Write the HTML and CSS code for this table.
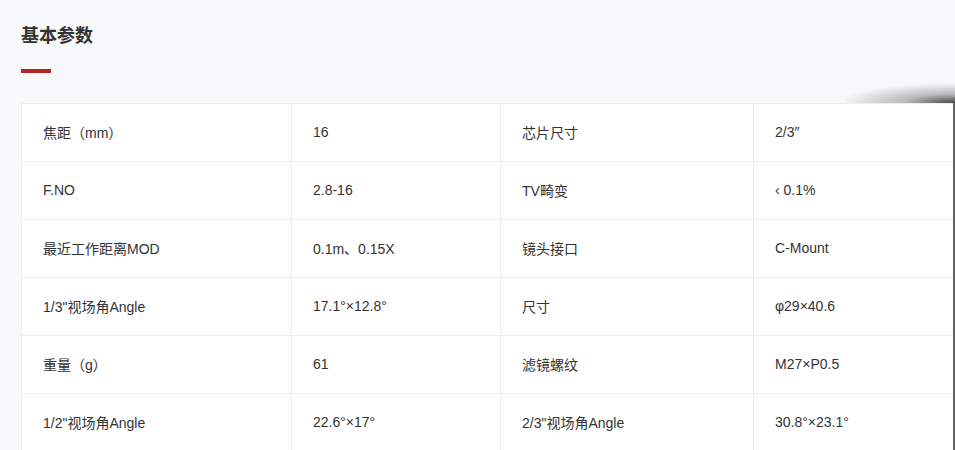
FILE: index.html
```html
<!DOCTYPE html>
<html lang="zh-CN">
<head>
    <meta charset="UTF-8">
    <meta name="viewport" content="width=device-width, initial-scale=1.0">
    <title>基本参数</title>
    <link rel="stylesheet" href="styles.css">
</head>
<body>
    <div class="section">
        <h2 class="title">基本参数</h2>
        <div class="title-line"></div>

        <div class="table-wrap">
            <table class="param-table">
                <colgroup>
                    <col class="col-a">
                    <col class="col-b">
                    <col class="col-c">
                    <col>
                </colgroup>
                <tr>
                    <td>焦距（mm）</td>
                    <td>16</td>
                    <td>芯片尺寸</td>
                    <td>2/3″</td>
                </tr>
                <tr>
                    <td>F.NO</td>
                    <td>2.8-16</td>
                    <td>TV畸变</td>
                    <td>‹ 0.1%</td>
                </tr>
                <tr>
                    <td>最近工作距离MOD</td>
                    <td>0.1m、0.15X</td>
                    <td>镜头接口</td>
                    <td>C-Mount</td>
                </tr>
                <tr>
                    <td>1/3"视场角Angle</td>
                    <td>17.1°×12.8°</td>
                    <td>尺寸</td>
                    <td>φ29×40.6</td>
                </tr>
                <tr>
                    <td>重量（g）</td>
                    <td>61</td>
                    <td>滤镜螺纹</td>
                    <td>M27×P0.5</td>
                </tr>
                <tr>
                    <td>1/2"视场角Angle</td>
                    <td>22.6°×17°</td>
                    <td>2/3"视场角Angle</td>
                    <td>30.8°×23.1°</td>
                </tr>
            </table>
        </div>
    </div>
</body>
</html>
```

FILE: styles.css
```css
body {
    margin: 0;
    background-color: #f7f8fa;
    font-family: "Liberation Sans", "Noto Sans CJK SC", sans-serif;
    color: #333;
    overflow: hidden;
}

.section {
    padding: 21px 0 0 21px;
}

.title {
    margin: 0;
    font-size: 18px;
    font-weight: bold;
    line-height: 30px;
    color: #333;
}

.title-line {
    width: 30px;
    height: 4px;
    margin-top: 18px;
    background-color: #b22a27;
}

/* 表格 */
.table-wrap {
    position: relative;
    margin-top: 30px;
    width: 932px;
    border-right: 2px solid #5f5f5f;
}

/* 右上角阴影 */
.table-wrap::before {
    content: "";
    position: absolute;
    right: -2px;
    top: -20px;
    width: 110px;
    height: 20px;
    background: radial-gradient(ellipse 115px 20px at 100% 100%, rgba(40, 40, 40, 0.85), rgba(70, 70, 70, 0.35) 45%, rgba(247, 248, 250, 0) 100%);
}

.param-table {
    width: 100%;
    border-collapse: collapse;
    background-color: #fff;
    table-layout: fixed;
}

.param-table .col-a { width: 270px; }
.param-table .col-b { width: 209px; }
.param-table .col-c { width: 253px; }

.param-table td {
    height: 55px;
    padding: 0 21px 2px;
    border: 1px solid #ededed;
    font-size: 14px;
    color: #333;
    white-space: nowrap;
}

.param-table td:last-child {
    border-right: none;
}
```
